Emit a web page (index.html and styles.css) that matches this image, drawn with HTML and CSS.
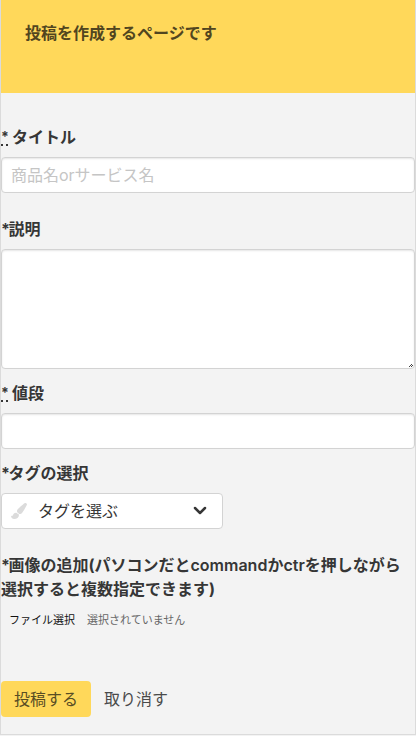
FILE: index.html
```html
<!DOCTYPE html>
<html lang="ja">
<head>
<meta charset="utf-8">
<title>投稿を作成</title>
<link rel="stylesheet" href="styles.css">
</head>
<body>
<main class="page">
  <header class="hero"><h1>投稿を作成するページです</h1></header>
  <form class="form">
    <div class="field field-title">
      <label class="label required" for="title"><abbr title="必須">*</abbr><span>タイトル</span></label>
      <input class="input" id="title" type="text" placeholder="商品名orサービス名">
    </div>
    <div class="field">
      <label class="label" for="body"><span class="star">*</span>説明</label>
      <div class="area-wrap">
        <textarea class="input area" id="body"></textarea>
        <svg class="grip" width="4" height="4" viewBox="0 0 4 4" shape-rendering="crispEdges"><path d="M0 3h1v1H0zM1 2h1v1H1zM2 1h1v1H2zM2 3h1v1H2zM3 2h1v1H3z" fill="#444"/></svg>
      </div>
    </div>
    <div class="field">
      <label class="label required" for="price"><abbr title="必須">*</abbr><span>値段</span></label>
      <input class="input" id="price" type="text">
    </div>
    <div class="field field-tag">
      <span class="label"><span class="star">*</span>タグの選択</span>
      <div class="select">
        <svg class="brush" width="16" height="16" viewBox="0 0 512 512"><path fill="#dbdbdb" d="M167 309C84 310 75 360 61 391c-8 17-24 28-43 24L0 401c0 65 37 111 103 111 81 0 152-46 152-129l-3-13zM457 0c-15 0-30 7-40 16C213 198 192 213 192 260c0 12 3 23 7 34l65 55c8 2 15 3 23 3 55 0 86-40 211-273 8-16 14-32 14-27C512 20 485 0 457 0z"/></svg>
        <span class="select-text">タグを選ぶ</span>
        <svg class="chevron" width="14" height="10" viewBox="0 0 14 10"><path d="M2 2l5 5 5-5" fill="none" stroke="#363636" stroke-width="2.5" stroke-linecap="round" stroke-linejoin="round"/></svg>
      </div>
    </div>
    <div class="field field-image">
      <span class="label"><span class="star">*</span>画像の追加(パソコンだと<span class="latin">command</span>か<span class="latin">ctr</span>を押しながら<br>選択すると複数指定できます)</span>
      <div class="file"><span class="file-button">ファイル選択</span><span class="file-name">選択されていません</span></div>
    </div>
    <div class="buttons">
      <button class="button primary" type="button">投稿する</button>
      <button class="button text" type="button">取り消す</button>
    </div>
  </form>
</main>
</body>
</html>
```

FILE: styles.css
```css
* { box-sizing: border-box; }
html { background: #f3f3f3; }
body {
  margin: 0;
  color: #363636;
  font: 16px/24px Inter, "Noto Sans CJK JP", sans-serif;
}
.page {
  height: 735px;
  border: 1px solid #dbdbdb;
  border-top: 0;
}
.hero {
  height: 93px;
  padding: 21px 24px;
  background: #ffd85a;
}
.hero h1 {
  margin: 0;
  color: #51451f;
  font-size: 16px;
  font-weight: 700;
  line-height: 24px;
}
.form { padding-top: 32px; }
.field { margin-bottom: 12px; }
.field-title, .field-tag { margin-bottom: 24px; }
.label {
  display: block;
  margin-bottom: 8px;
  font-weight: 700;
  white-space: nowrap;
}
.required { display: flex; gap: 4px; height: 24px; }
.label abbr {
  width: 7px;
  height: 21px;
  font-size: 14px;
  text-decoration: none;
  border-bottom: 2px dotted #363636;
}
.star { display: inline-block; width: 7.5px; }
.latin { font-weight: 600; }
.input, .select {
  display: block;
  width: 100%;
  height: 36px;
  margin: 0;
  padding: 5px 9px;
  border: 1px solid #d3d3d3;
  border-radius: 4px;
  background: #fff;
  color: #363636;
  font: inherit;
}
.input { box-shadow: inset 0 1px 2px rgba(10, 10, 10, .1); }
.input::placeholder { color: #c5c5c5; opacity: 1; }
.area-wrap { position: relative; }
.area { height: 120px; resize: none; }
.grip { position: absolute; right: 2px; bottom: 2px; }
.select {
  display: flex;
  align-items: center;
  width: 222px;
}
.select-text { margin-left: 11px; }
.chevron { margin-left: auto; margin-right: 6px; }
.field-image { margin-bottom: 49px; }
.file {
  display: flex;
  gap: 12px;
  height: 23px;
  padding-left: 8px;
  font-size: 11px;
  line-height: 22px;
}
.file-button { color: #111; }
.file-name { color: #666; }
.buttons { display: flex; }
.button {
  height: 36px;
  padding: 0 13px;
  border: 0;
  border-radius: 4px;
  background: transparent;
  color: #4a4a4a;
  font: inherit;
}
.primary { background: #ffd85a; color: #594d24; }
```
